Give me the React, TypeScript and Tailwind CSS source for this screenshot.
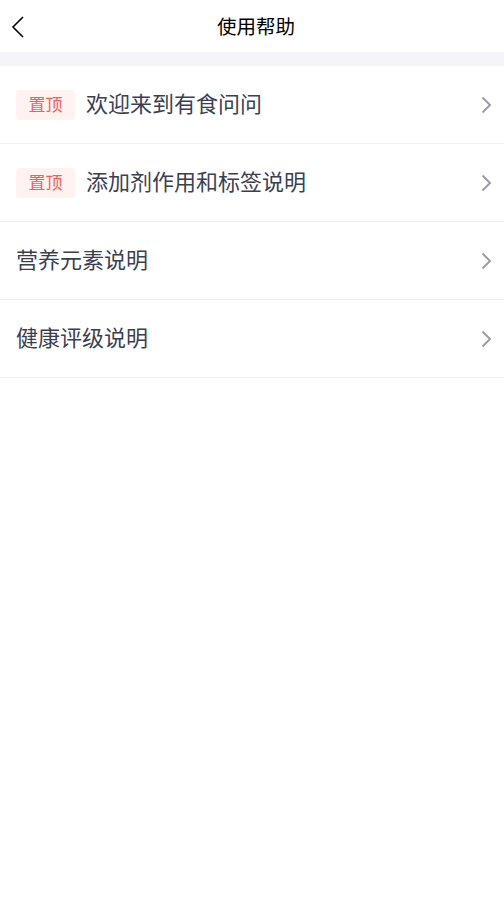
const font = "font-['Noto_Sans_CJK_SC','Noto_Sans',sans-serif]";

const items = [
  { title: "欢迎来到有食问问", pinned: true },
  { title: "添加剂作用和标签说明", pinned: true },
  { title: "营养元素说明", pinned: false },
  { title: "健康评级说明", pinned: false },
];

function Chevron({ className }: { className?: string }) {
  return (
    <svg viewBox="0 0 11 18" className={className} fill="none" stroke="currentColor" strokeWidth="2">
      <path d="M1.5 1.5l7.5 7.5-7.5 7.5" />
    </svg>
  );
}

export default function App() {
  return (
    <div className={`min-h-[903px] w-[504px] bg-white ${font}`}>
      <header className="relative flex h-[52px] items-center justify-center pl-[8px]">
        <button className="absolute left-[11px] top-[15px] text-black">
          <svg viewBox="0 0 14 24" className="h-[24px] w-[14px]" fill="none" stroke="currentColor" strokeWidth="1.6">
            <path d="M12 2L2 12l10 10" />
          </svg>
        </button>
        <h1 className="text-[19.5px] leading-none text-black">使用帮助</h1>
      </header>
      <div className="h-[14px] bg-[#f4f5f8]" />
      <ul>
        {items.map((item) => (
          <li
            key={item.title}
            className="flex h-[78px] items-center border-b border-[#f0f0f2] pl-[16px] pr-[12px]"
          >
            {item.pinned ? (
              <span className="mr-[11px] flex h-[30px] w-[59px] items-center justify-center rounded-[3px] bg-[#fff2f1] pb-[2px] text-[17px] text-[#f2605c]">
                置顶
              </span>
            ) : null}
            <span className="mb-[5px] flex-1 text-[22px] leading-none text-[#3b3f52]">{item.title}</span>
            <Chevron className="h-[18px] w-[11px] text-[#9b9ca6]" />
          </li>
        ))}
      </ul>
    </div>
  );
}
